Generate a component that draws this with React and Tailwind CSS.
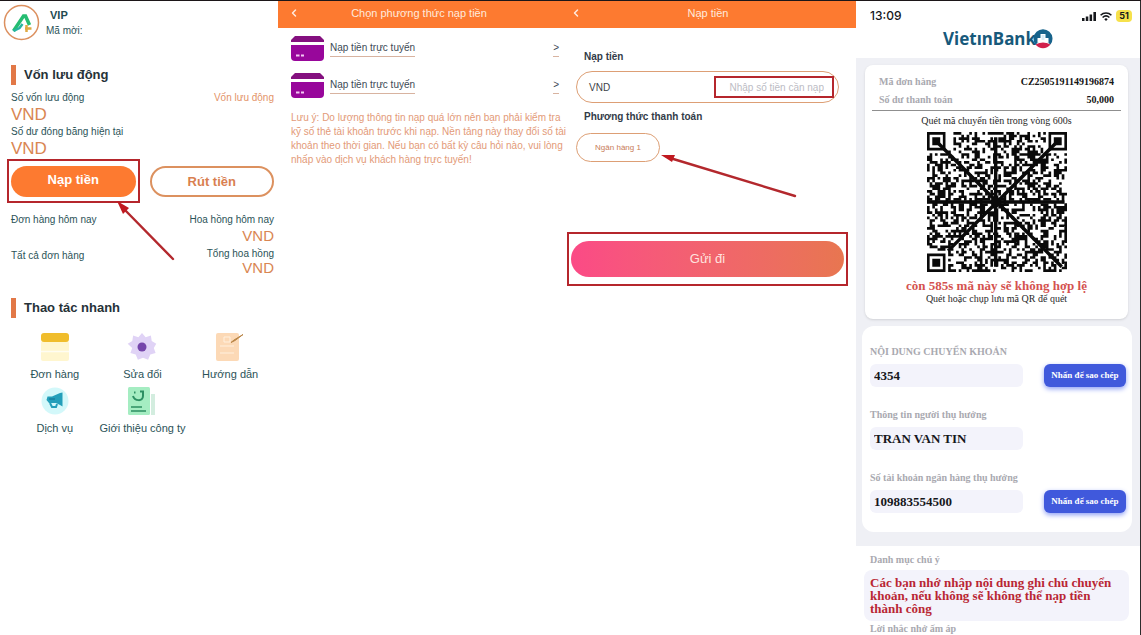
import React from "react";
import { ChevronLeft } from "lucide-react";

const QR_SIZE = 53;

function buildQrPath() {
  const finderAt = (x, y, ox, oy) => {
    const dx = x - ox;
    const dy = y - oy;
    if (dx < -1 || dy < -1 || dx > 7 || dy > 7) return null;
    if (dx < 0 || dy < 0 || dx > 6 || dy > 6) return false;
    const ring = Math.max(Math.abs(dx - 3), Math.abs(dy - 3));
    return ring !== 2;
  };
  let seed = 20250519;
  let path = "";
  for (let y = 0; y < QR_SIZE; y++) {
    for (let x = 0; x < QR_SIZE; x++) {
      seed = (Math.imul(seed, 1664525) + 1013904223) >>> 0;
      let on = (seed >>> 16) % 100 < 50;
      const finders = [
        finderAt(x, y, 0, 0),
        finderAt(x, y, QR_SIZE - 7, 0),
        finderAt(x, y, 0, QR_SIZE - 7),
      ];
      for (const f of finders) if (f !== null) on = f;
      if (on) path += `M${x} ${y}h1v1h-1z`;
    }
  }
  return path;
}

const QR_PATH = buildQrPath();

function QrCode() {
  return (
    <svg viewBox="0 0 53 53" className="size-[140px]" role="img" aria-label="QR">
      <path d={QR_PATH} fill="#0a0a0a" />
      <g stroke="#0a0a0a" strokeWidth="1.3">
        <path d="M4 4L51 51M49 4L8 45M26 2V51M0 26.5H52" />
      </g>
      <circle cx="26" cy="26.500" r="2" fill="#0a0a0a" />
    </svg>
  );
}

function OrdersIcon() {
  return (
    <svg viewBox="0 0 30 30" className="size-[30px]" aria-hidden="true">
      <rect x="1" y="9" width="28" height="20" rx="2" fill="#fff6cf" />
      <path d="M1 19.5h28" stroke="#fffdf2" strokeWidth="1.5" />
      <rect x="1" y="1" width="28" height="9" rx="3" fill="#f0bd2c" />
    </svg>
  );
}

function GearIcon() {
  return (
    <svg viewBox="0 0 30 30" className="size-[30px]" aria-hidden="true">
      <path
        d="M15 1l3.6 4.2 5.3-1.6.8 5.5 4.6 2.6-2.5 4.2 1.8 5.2-5.3 1.4-2.2 5.2-5.1-1.9-5.1 1.9-2.2-5.2-5.3-1.4 1.8-5.2L.7 11.7l4.6-2.6.8-5.5 5.3 1.6z"
        fill="#e0d3f6"
      />
      <circle cx="15" cy="15" r="4.5" fill="#7546ab" />
    </svg>
  );
}

function GuideIcon() {
  return (
    <svg viewBox="0 0 30 30" className="size-[30px]" aria-hidden="true">
      <rect x="1" y="1" width="23" height="28" rx="2" fill="#fcd9b6" />
      <path d="M9 5h6v5H9zM5 14h14M5 21h14" stroke="#fff0de" strokeWidth="1" fill="none" />
      <path d="M16 10.500l3-2.500L28 2.500l-8 6z" fill="#b98546" stroke="#b98546" />
    </svg>
  );
}

function ServiceIcon() {
  return (
    <svg viewBox="0 0 30 30" className="size-[30px]" aria-hidden="true">
      <circle cx="15" cy="15" r="13.5" fill="#d3f8fa" />
      <path d="M12 10.500l8-3.500 2.500-.5v14L20 19l-4-2H9l-2.500-3 1-3.500z" fill="#239fba" />
      <path d="M10 17l2 4h4l1-3" fill="none" stroke="#239fba" strokeWidth="2" />
      <path d="M9 13h6" stroke="#126f91" />
    </svg>
  );
}

function CompanyIcon() {
  return (
    <svg viewBox="0 0 30 30" className="size-[30px]" aria-hidden="true">
      <path d="M24 8h4v21h-4z" fill="#d3eddf" />
      <rect x="1" y="1" width="22" height="28" rx="1.500" fill="#a5edc2" />
      <path d="M6 10c1.500 5 10 6 10 0V5M13 5.500h4M7 6.500h1.500" fill="none" stroke="#2c8f62" strokeWidth="2" />
      <path d="M4 21h11M4 25h15" stroke="#2c8f62" strokeWidth="1.500" />
    </svg>
  );
}

function CardIcon() {
  return (
    <svg viewBox="0 0 33 25" className="h-[25px] w-[33px]" aria-hidden="true">
      <path d="M0 6V4l4-4h25l4 4v2z" fill="#84107f" />
      <path d="M0 9h33v12a4 4 0 0 1-4 4H4a4 4 0 0 1-4-4z" fill="#98079b" />
      <path d="M5 19.500h3.500M10 19.500h3" stroke="#f3c9f4" strokeWidth="2" />
    </svg>
  );
}

function Arrow({ className, viewBox, line, head }) {
  return (
    <svg viewBox={viewBox} className={className} aria-hidden="true">
      <path d={line} stroke="#b3282d" strokeWidth="2.400" strokeLinecap="round" />
      <path d={head} fill="#c01920" />
    </svg>
  );
}

function SectionTitle({ children }) {
  return (
    <h2 className="flex h-5 items-center gap-2 text-[13px] font-bold text-[#263238]">
      <span className="h-5 w-[5px] bg-[#e27847]" />
      {children}
    </h2>
  );
}

const actions = [
  { label: "Đơn hàng", Icon: OrdersIcon },
  { label: "Sửa đổi", Icon: GearIcon },
  { label: "Hướng dẫn", Icon: GuideIcon },
  { label: "Dịch vụ", Icon: ServiceIcon },
  { label: "Giới thiệu công ty", Icon: CompanyIcon },
];

function WalletPanel() {
  return (
    <section className="min-w-0 pr-1 pl-[11px] text-[10px] leading-4 text-[#2b5358]">
      <header className="-ml-2 flex h-[42px] items-center gap-[5px] pt-[2px]">
        <svg viewBox="0 0 38 38" className="size-[38px]" aria-hidden="true">
          <circle cx="18.500" cy="18.500" r="17" fill="#fff" stroke="#dc905f" strokeWidth="1.500" />
          <path d="M10.500 27l10-15h2l4 9" fill="none" stroke="#25bd72" strokeWidth="3.500" />
          <path d="M10.500 27l6-3 3-4" fill="none" stroke="#27b4a0" strokeWidth="2.500" />
          <path d="M22 24.500h6.500M23.500 21v7" stroke="#dfa942" strokeWidth="2.500" />
        </svg>
        <div>
          <p className="pl-1 text-[11px] font-bold text-[#234a50]">VIP</p>
          <p>Mã mời:</p>
        </div>
      </header>

      <div className="mt-[22px]">
        <SectionTitle>Vốn lưu động</SectionTitle>
      </div>
      <div className="mt-[5px] flex justify-between">
        <span>Số vốn lưu động</span>
        <a href="#funds" className="text-[#e39369]">Vốn lưu động</a>
      </div>
      <p className="text-[17px] leading-[18px] text-[#d98652]">VND</p>
      <p>Số dư đóng băng hiện tại</p>
      <p className="text-[17px] leading-[18px] text-[#d98652]">VND</p>

      <div className="mt-2 grid grid-cols-2 gap-[14px]">
        <div className="relative">
          <button className="block h-[31px] w-full rounded-full bg-[#fd7a30] pb-1 text-[13px] font-bold text-white">Nạp tiền</button>
          <span className="pointer-events-none absolute -inset-x-1 -top-[7px] -bottom-[6px] border-2 border-[#b5262c]" />
          <Arrow
            className="absolute top-[34px] left-[104px] h-[62px] w-[62px]"
            viewBox="0 0 62 62"
            line="M8 8L58 59"
            head="M2 1l12 7-6 6z"
          />
        </div>
        <button className="h-[31px] rounded-full border-2 border-[#dc915f] text-[13px] font-bold text-[#d98050]">Rút tiền</button>
      </div>

      <div className="mt-[15px] flex justify-between">
        <span>Đơn hàng hôm nay</span>
        <div className="text-right">
          <p>Hoa hồng hôm nay</p>
          <p className="text-[15px] leading-4 text-[#d98652]">VND</p>
        </div>
      </div>
      <div className="mt-1 flex justify-between">
        <span>Tất cả đơn hàng</span>
        <div className="text-right">
          <p className="leading-3">Tổng hoa hồng</p>
          <p className="text-[15px] leading-4 text-[#d98652]">VND</p>
        </div>
      </div>

      <div className="mt-[22px]">
        <SectionTitle>Thao tác nhanh</SectionTitle>
      </div>
      <nav className="mt-[14px] grid grid-cols-3 gap-y-1 text-[11px]">
        {actions.map(({ label, Icon }) => (
          <a key={label} href="#action" className="flex flex-col items-center gap-1 whitespace-nowrap">
            <Icon />
            {label}
          </a>
        ))}
      </nav>
    </section>
  );
}

function OrangeBar({ children }) {
  return (
    <header className="grid h-[27px] grid-cols-[32px_1fr_32px] items-center bg-[#fd7a30] pb-[3px] text-[11px] text-[#ffeadd]">
      <button aria-label="Quay lại" className="flex justify-center">
        <ChevronLeft className="size-3" strokeWidth={3} />
      </button>
      <h1 className="text-center whitespace-nowrap">{children}</h1>
    </header>
  );
}

function MethodPanel() {
  return (
    <section className="min-w-0 text-[10px]">
      <OrangeBar>Chọn phương thức nạp tiền</OrangeBar>
      <div className="flex flex-col gap-3 pt-2 pl-[13px]">
        {["online-1", "online-2"].map((id) => (
          <a key={id} href="#online" className="flex items-center justify-between pr-[1px] text-[#3c4a55]">
            <span className="flex items-center gap-[6px]">
              <CardIcon />
              <span className="border-b border-[#d8b3a0] leading-4 whitespace-nowrap">Nạp tiền trực tuyến</span>
            </span>
            <span className="border-b border-[#d8b3a0] leading-4">&gt;</span>
          </a>
        ))}
        <p className="pt-px leading-[14px] whitespace-nowrap text-[#e39a78]">
          Lưu ý: Do lượng thông tin nạp quá lớn nên bạn phải kiểm tra<br />
          kỹ số thẻ tài khoản trước khi nạp. Nền tảng này thay đổi số tài<br />
          khoản theo thời gian. Nếu bạn có bất kỳ câu hỏi nào, vui lòng<br />
          nhấp vào dịch vụ khách hàng trực tuyến!
        </p>
      </div>
    </section>
  );
}

function DepositPanel() {
  return (
    <section className="min-w-0 text-[10px] text-[#3c3f49]">
      <OrangeBar>Nạp tiền</OrangeBar>
      <form className="pt-[21px]" onSubmit={(e) => e.preventDefault()}>
        <div className="pr-[17px] pl-4">
          <h2 className="pl-2 leading-4 font-bold text-[#323b48]">Nạp tiền</h2>
          <div className="mt-[6px] flex h-8 items-center justify-between rounded-full border border-[#dd9f75] pl-3">
            <label htmlFor="amount">VND</label>
            <input
              id="amount"
              placeholder="Nhập số tiền cần nạp"
              className="mr-1 h-[22px] w-[120px] border-2 border-[#b5262c] pr-2 text-right text-[10px] outline-none placeholder:text-[#bcbcc4]"
            />
          </div>
          <h2 className="mt-[6px] pl-2 leading-4 font-bold text-[#323b48]">Phương thức thanh toán</h2>
          <div className="relative mt-2">
            <button type="button" className="h-[29px] w-[84px] rounded-full border border-[#dd9f75] text-[8px] text-[#c87b58]">
              Ngân hàng 1
            </button>
            <Arrow
              className="absolute top-[21px] left-[84px] h-[44px] w-[138px]"
              viewBox="0 0 138 44"
              line="M10 4L135 42"
              head="M1 1l14 0-3 7z"
            />
          </div>
        </div>
        <div className="mt-[70px] mr-2 ml-[7px] border-2 border-[#b5262c] px-[2px] py-[7px]">
          <button className="block h-9 w-full rounded-full bg-linear-to-r from-[#fb4a86] to-[#e87650] text-[13px] text-[#ffe3df]">
            Gửi đi
          </button>
        </div>
      </form>
    </section>
  );
}

function BankLogo() {
  return (
    <div className="flex items-center justify-center pt-px text-[17px] leading-5 font-bold text-[#17597b]">
      <span className="font-['Noto_Sans',sans-serif]">VietınBank</span>
      <svg viewBox="0 0 20 20" className="-ml-[3px] size-5" aria-hidden="true">
        <path d="M2.500 15.500A9.500 9.500 0 1 1 17.500 15.500L14 13H6z" fill="#17638b" />
        <path d="M2.500 15.500Q10 11.500 17.500 15.500A9.500 9.500 0 0 1 2.500 15.500z" fill="#d2214c" />
        <path d="M7.500 5h5v4h3v5q-5.500-2-11 0V9h3z" fill="#fff" />
        <path d="M8.500 6h3v5h-3z" fill="#d9ecf6" />
      </svg>
    </div>
  );
}

function StatusBar() {
  return (
    <div className="flex h-[27px] items-center justify-between pt-[3px] pr-2 pl-[14px] text-[12px] font-medium text-[#16181c]">
      <span className="font-[Inter,sans-serif]">13:09</span>
      <span className="flex items-center gap-1">
        <svg viewBox="0 0 14 9" className="h-[9px] w-[14px]" aria-hidden="true">
          <path d="M0 6h2.500v3H0zM3.800 4.500h2.500V9H3.800zM7.600 2.500h2.500V9H7.600zM11.400 0H14v9h-2.600z" fill="#16181c" />
        </svg>
        <svg viewBox="0 0 12 9" className="h-[9px] w-3" aria-hidden="true">
          <g fill="none" stroke="#16181c" strokeWidth="1.600">
            <path d="M.6 3.300c3-3 7.800-3 10.800 0M2.600 5.500c2-1.900 4.800-1.900 6.800 0" />
          </g>
          <path d="M4.300 7.200a2.400 2.400 0 0 1 3.400 0L6 9z" fill="#16181c" />
        </svg>
        <span className="rounded-sm bg-[#f6e14b] px-[3px] font-[Inter,sans-serif] text-[9px] leading-3 font-bold">51</span>
      </span>
    </div>
  );
}

function TransferField({ id, label, value, copy, caps }) {
  return (
    <div>
      <label htmlFor={id} className={caps ? "block text-[10px] leading-4 uppercase" : "block text-[10px] leading-4"}>
        {label}
      </label>
      <div className="mt-1 flex items-center justify-between">
        <input
          id={id}
          readOnly
          value={value}
          className="h-[23px] w-[153px] rounded-md bg-[#f3f3fb] px-1 text-[13px] font-bold text-[#17171c] outline-none"
        />
        {copy && (
          <button className="h-[23px] w-[82px] rounded-md bg-[#4059dc] text-[9px] font-bold whitespace-nowrap text-white shadow-[0_2px_5px_#8fa0f5]">
            Nhấn để sao chép
          </button>
        )}
      </div>
    </div>
  );
}

function BankPanel() {
  return (
    <section className="flex min-w-0 flex-col border-r border-[#2c2c2c] bg-[#eff0f5] font-['Liberation_Serif',serif] text-[#a9a9b0]">
      <header className="h-[57px] bg-white">
        <StatusBar />
        <BankLogo />
      </header>

      <div className="mt-[7px] mr-3 ml-[9px] rounded-lg bg-white px-[7px] pt-2 pb-[14px] text-[10px] font-bold shadow-sm">
        <dl className="border-b border-[#8f8f8f] pr-[7px] pb-px pl-[7px]">
          <div className="flex justify-between leading-[18px]">
            <dt>Mã đơn hàng</dt>
            <dd className="text-[#151515]">CZ2505191149196874</dd>
          </div>
          <div className="flex justify-between leading-[18px]">
            <dt>Số dư thanh toán</dt>
            <dd className="text-[#151515]">50,000</dd>
          </div>
        </dl>
        <div className="flex flex-col items-center font-normal text-[#2a2a2a]">
          <p className="pt-[3px] pb-1 leading-[14px]">Quét mã chuyển tiền trong vòng 600s</p>
          <QrCode />
          <p className="mt-[7px] text-[13px] leading-[14px] font-bold whitespace-nowrap text-[#d4524f]">còn 585s mã này sẽ không hợp lệ</p>
          <p className="leading-3">Quét hoặc chụp lưu mã QR để quét</p>
        </div>
      </div>

      <div className="mt-[7px] mr-2 ml-[6px] flex flex-col gap-5 rounded-xl bg-white pt-[18px] pr-[6px] pb-[19px] pl-2 font-bold">
        <TransferField id="content" label="Nội dung chuyển khoản" value="4354" copy caps />
        <TransferField id="holder" label="Thông tin người thụ hưởng" value="TRAN VAN TIN" />
        <TransferField id="account" label="Số tài khoản ngân hàng thụ hưởng" value="109883554500" copy />
      </div>

      <div className="mt-[14px] grow bg-white pt-[6px] pr-[11px] pl-2 text-[10px] font-bold">
        <h2 className="pl-[6px] leading-4">Danh mục chú ý</h2>
        <p className="mt-[2px] rounded-lg bg-[#f3f3fb] px-[6px] py-[6px] text-[13px] leading-[13px] text-[#b92633]">
          Các bạn nhớ nhập nội dung ghi chú chuyển khoản, nếu không sẽ không thể nạp tiền thành công
        </p>
        <h2 className="mt-[2px] pl-[6px] leading-3">Lời nhắc nhở ấm áp</h2>
      </div>
    </section>
  );
}

export default function App() {
  return (
    <main className="grid h-screen grid-cols-[278fr_282fr_296fr_285fr] overflow-hidden border-t border-[#1c1618] bg-white font-['Liberation_Sans',sans-serif]">
      <WalletPanel />
      <MethodPanel />
      <DepositPanel />
      <BankPanel />
    </main>
  );
}
